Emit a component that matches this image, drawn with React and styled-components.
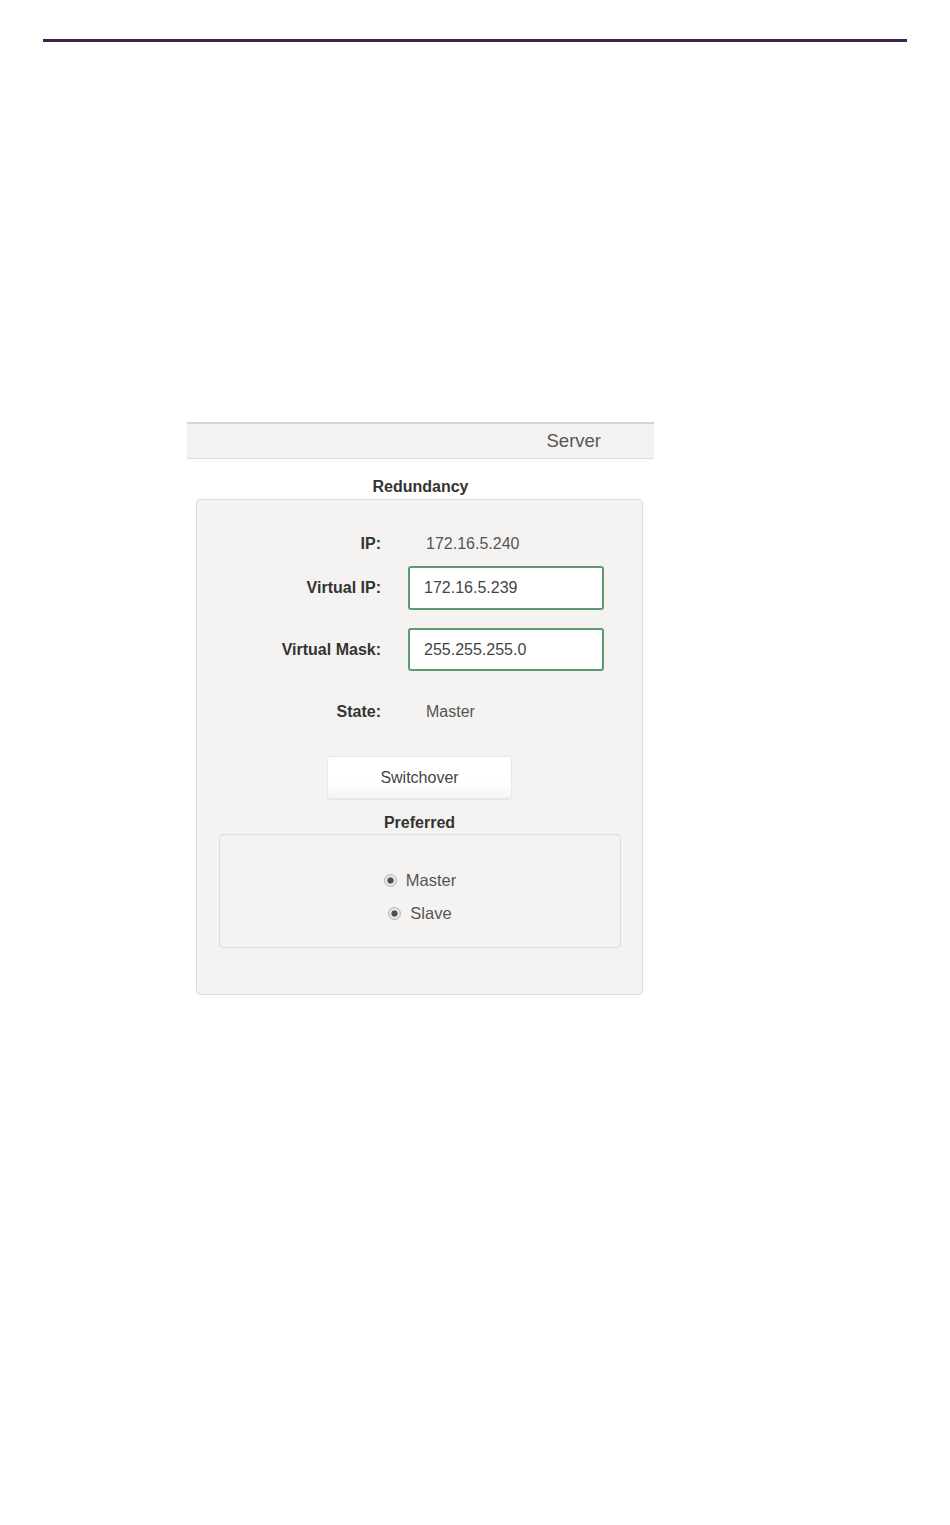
import React from 'react';
import styled, { createGlobalStyle } from 'styled-components';

const GlobalStyle = createGlobalStyle`
  body {
    margin: 0;
    background: #ffffff;
    font-family: "Liberation Sans", Arial, sans-serif;
  }
`;

const Page = styled.div`
  width: 950px;
  height: 1525px;
  padding-top: 39px;
  box-sizing: border-box;
`;

const Rule = styled.div`
  margin: 0 43px;
  height: 3px;
  background: #3c2450;
`;

const Panel = styled.div`
  width: 467px;
  margin: 380px 0 0 187px;
`;

const TabBar = styled.div`
  height: 34px;
  border-top: 2px solid #d6d6d6;
  border-bottom: 1px solid #dcdcdc;
  background: #f3f2f1;
  display: flex;
  align-items: center;
  justify-content: flex-end;
  padding-right: 53px;
  font-size: 18.5px;
  color: #575757;
`;

const Legend = styled.div`
  text-align: center;
  font-weight: bold;
  font-size: 16px;
  color: #333;
  margin-top: ${(p) => p.$mt}px;
  width: ${(p) => p.$w}px;
  line-height: 18px;
`;

const Box = styled.div`
  width: ${(p) => p.$w}px;
  margin-left: ${(p) => p.$ml}px;
  margin-top: ${(p) => p.$mt || 0}px;
  box-sizing: border-box;
  border: 1px solid #dedede;
  border-radius: 4px;
  background: #f4f3f2;
  padding: ${(p) => p.$pad};
  display: flex;
  flex-direction: column;
`;

const Row = styled.div`
  display: grid;
  grid-template-columns: 184px 196px;
  column-gap: 27px;
  align-items: center;
  margin-top: ${(p) => p.$mt}px;
  min-height: 24px;
`;

const Label = styled.div`
  text-align: right;
  font-weight: bold;
  font-size: 16px;
  color: #333;
`;

const Value = styled.div`
  padding-left: 18px;
  font-size: 16px;
  color: #555;
`;

const Field = styled.input`
  width: 196px;
  height: ${(p) => p.$h}px;
  box-sizing: border-box;
  border: 2px solid #5d9a72;
  border-radius: 3px;
  background: #fff;
  padding: 0 0 0 14px;
  font-family: inherit;
  font-size: 16px;
  color: #444;
  outline: none;
`;

const SwitchButton = styled.button`
  align-self: center;
  width: 185px;
  height: 43px;
  margin-top: 32px;
  border: 1px solid #e8e8e8;
  border-radius: 3px;
  background: linear-gradient(#ffffff 60%, #f6f6f6);
  box-shadow: 0 1px 1px rgba(0, 0, 0, 0.05);
  font-family: inherit;
  font-size: 16px;
  color: #454545;
`;

const Choice = styled.label`
  display: flex;
  justify-content: center;
  align-items: center;
  gap: 9px;
  font-size: 16.5px;
  color: #555;
  height: 20px;
  margin-top: ${(p) => p.$mt}px;
`;

const Radio = styled.input`
  appearance: none;
  margin: 0;
  width: 13px;
  height: 13px;
  border-radius: 50%;
  border: 1px solid #b4b4b4;
  background: radial-gradient(circle, #4f4f4f 0 2.8px, #e6e6e6 3.4px);
`;

export default function App() {
  return (
    <Page>
      <GlobalStyle />
      <Rule />
      <Panel>
        <TabBar>Server</TabBar>
        <Legend $mt={19} $w={467}>Redundancy</Legend>
        <Box $w={447} $ml={9} $mt={3} $pad="32px 0 46px 0">
          <Row $mt={0}>
            <Label>IP:</Label>
            <Value>172.16.5.240</Value>
          </Row>
          <Row $mt={10}>
            <Label>Virtual IP:</Label>
            <Field $h={44} defaultValue="172.16.5.239" />
          </Row>
          <Row $mt={18}>
            <Label>Virtual Mask:</Label>
            <Field $h={43} defaultValue="255.255.255.0" />
          </Row>
          <Row $mt={29}>
            <Label>State:</Label>
            <Value>Master</Value>
          </Row>
          <SwitchButton>Switchover</SwitchButton>
          <Legend $mt={15} $w={445}>Preferred</Legend>
          <Box $w={402} $ml={22} $mt={2} $pad="35px 0 24px 0">
            <Choice $mt={0}>
              <Radio type="radio" name="pref-m" defaultChecked />
              Master
            </Choice>
            <Choice $mt={13}>
              <Radio type="radio" name="pref-s" defaultChecked />
              Slave
            </Choice>
          </Box>
        </Box>
      </Panel>
    </Page>
  );
}
